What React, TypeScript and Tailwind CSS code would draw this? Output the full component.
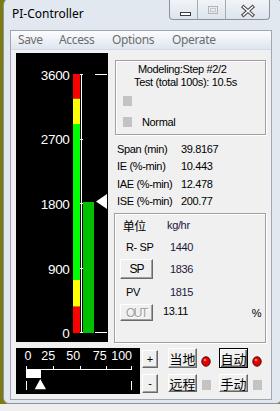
import React from "react";

const BTN =
  "bg-[#f0f0f0] border border-t-white border-l-white border-r-[#696969] border-b-[#696969] shadow-[inset_-1px_-1px_0_#a0a0a0] flex items-center justify-center";
const BTN_DEF =
  "bg-[#f0f0f0] border border-black shadow-[inset_1px_1px_0_#fff,inset_-1px_-1px_0_#696969,inset_-2px_-2px_0_#a0a0a0] flex items-center justify-center";
const GROUP =
  "border border-[#a0a0a0] shadow-[inset_1px_1px_0_#fff,1px_1px_0_#fff]";
const CJK = "font-['Noto_Sans_CJK_SC',sans-serif]";

function Gauge() {
  const labels: [string, number][] = [
    ["3600", 27],
    ["2700", 91.3],
    ["1800", 156.3],
    ["900", 221.3],
    ["0", 285.3],
  ];
  const ticks = [21, 86, 150, 215, 279];
  return (
    <svg width={92} height={289} className="block bg-black">
      {labels.map(([t, y]) => (
        <text
          key={t}
          x={53.5}
          y={y}
          textAnchor="end"
          fill="#fff"
          fontFamily="'Liberation Sans', Arial, sans-serif"
          fontSize={13.5}
        >
          {t}
        </text>
      ))}
      <rect x={57} y={21} width={7} height={24.7} fill="#ff0000" />
      <rect x={57} y={45.7} width={7} height={25.3} fill="#ffff00" />
      <rect x={57} y={71} width={7} height={156} fill="#00ff00" />
      <rect x={57} y={227} width={7} height={26.7} fill="#ffff00" />
      <rect x={57} y={253.7} width={7} height={26.3} fill="#ff0000" />
      <rect x={65} y={21} width={1} height={259} fill="#fff" />
      {ticks.map((y) => (
        <rect key={y} x={64} y={y} width={3} height={1} fill="#fff" />
      ))}
      <rect x={67} y={149} width={11} height={131} fill="#00c000" />
      <polygon points="80,148.5 91,141 91,156" fill="#fff" />
      <rect x={79} y={21} width={12} height={1} fill="#fff" />
      <rect x={79} y={279} width={12} height={1} fill="#fff" />
    </svg>
  );
}

function Slider() {
  const labels: [string, number][] = [
    ["0", 8.5],
    ["25", 25.2],
    ["50", 50.2],
    ["75", 76.8],
    ["100", 95.2],
  ];
  const ticks = [10, 36.7, 63.7, 89.7, 115];
  return (
    <svg width={124} height={46} className="block bg-black">
      {labels.map(([t, x]) => (
        <text
          key={t}
          x={x}
          y={12.2}
          fill="#fff"
          fontFamily="'Liberation Sans', Arial, sans-serif"
          fontSize={12.5}
        >
          {t}
        </text>
      ))}
      <rect x={10} y={21} width={106} height={1} fill="#fff" />
      {ticks.map((x) => (
        <rect key={x} x={Math.round(x)} y={18} width={1} height={3} fill="#fff" />
      ))}
      <rect x={10} y={21} width={15} height={9} fill="#fff" />
      <rect x={10} y={33} width={1} height={9} fill="#fff" />
      <rect x={115} y={33} width={1} height={9} fill="#fff" />
      <polygon points="24.3,31 18.7,41.3 30,41.3" fill="#fff" />
    </svg>
  );
}

function Led() {
  return (
    <svg width={10} height={11} viewBox="0 0 10 11" className="block">
      <ellipse cx={5} cy={5.5} rx={4.2} ry={4.7} fill="#e60000" stroke="#4a0000" strokeWidth={1} />
      <ellipse cx={4} cy={4} rx={1.4} ry={1.2} fill="#ff7070" />
    </svg>
  );
}

function CaptionButtons() {
  return (
    <div className="ml-auto mr-[11px] flex h-[22px] border border-t-0 border-[#8a949f] rounded-b-[4px] overflow-hidden bg-linear-to-b from-[#f3f6f9] to-[#dde4ec] shadow-[inset_0_1px_0_#fff]">
      <div className="w-[28px] h-full border-r border-[#a3acb6] relative">
        <svg width={28} height={22} className="block">
          <rect x={10.5} y={14.5} width={10} height={3} fill="#fff" stroke="#3e3e3e" />
        </svg>
      </div>
      <div className="w-[28px] h-full border-r border-[#a3acb6]">
        <svg width={28} height={22} className="block">
          <rect x={10.5} y={8.5} width={9} height={7} fill="none" stroke="#b4b4b4" />
          <rect x={12.5} y={10.5} width={5} height={3} fill="none" stroke="#c8c8c8" />
        </svg>
      </div>
      <div className="w-[43px] h-full">
        <svg width={43} height={22} className="block">
          <path d="M17.5 9 L26.5 17 M26.5 9 L17.5 17" stroke="#4a4a4a" strokeWidth={3.6} strokeLinecap="square" />
          <path d="M17.5 9 L26.5 17 M26.5 9 L17.5 17" stroke="#fff" strokeWidth={1.5} strokeLinecap="square" />
        </svg>
      </div>
    </div>
  );
}

function Menu() {
  return (
    <div className="h-[19px] flex items-center pl-[7px] bg-linear-to-b from-[#fbfcfe] to-[#dfe6ef] border-b border-[#d3dae3] font-['Noto_Sans',sans-serif] text-[12px] leading-[16px] text-[#6d6d6d]">
      <span className="w-[41px]">Save</span>
      <span className="w-[53px]">Access</span>
      <span className="w-[60px]">Options</span>
      <span>Operate</span>
    </div>
  );
}

function Stats() {
  const rows: [string, string][] = [
    ["Span (min)", "39.8167"],
    ["IE (%-min)", "10.443"],
    ["IAE (%-min)", "12.478"],
    ["ISE (%-min)", "200.77"],
  ];
  return (
    <div className="mt-[5.5px] flex flex-col">
      {rows.map(([a, b]) => (
        <div key={a} className="h-[17.5px] flex items-center pl-[3px] leading-[13px]">
          <span className="w-[64px]">{a}</span>
          <span>{b}</span>
        </div>
      ))}
    </div>
  );
}

function Group2() {
  const val = "text-[#1d1640]";
  return (
    <div className={`mt-[2.5px] w-[152px] h-[130px] flex flex-col ${GROUP}`}>
      <div className="mt-[4px] h-[16px] flex items-center">
        <span className={`w-[52px] pl-[7.7px] text-[12px] leading-none ${CJK}`}>单位</span>
        <span className={`${val} -mt-[1px]`}>kg/hr</span>
      </div>
      <div className="mt-[5.5px] h-[16px] flex items-center">
        <span className="w-[55px] pl-[11px]">R- SP</span>
        <span className={val}>1440</span>
      </div>
      <div className="mt-[3.5px] h-[20px] flex items-center">
        <div className="w-[55px] pl-[5px]">
          <div className={`w-[33px] h-[20px] text-[12px] tracking-[-1px] ${BTN}`}>SP</div>
        </div>
        <span className={val}>1836</span>
      </div>
      <div className="mt-[5px] h-[16px] flex items-center">
        <span className="w-[55px] pl-[11px]">PV</span>
        <span className={val}>1815</span>
      </div>
      <div className="mt-[4px] h-[17px] flex items-center">
        <div className="w-[48px] pl-[5px]">
          <div
            className={`w-[33px] h-[17px] text-[12px] tracking-[-1.4px] text-[#a0a0a0] [text-shadow:1px_1px_0_#fff] ${BTN}`}
          >
            OUT
          </div>
        </div>
        <span className="w-[88.7px] -mt-[2px]">13.11</span>
        <span className="mt-[1px]">%</span>
      </div>
    </div>
  );
}

function Group1() {
  return (
    <div className={`mt-[7px] ml-[1px] w-[151px] h-[75px] ${GROUP} leading-[12.5px]`}>
      <div className="pt-[2px]">
        <div className="pl-[22px]">Modeling:Step #2/2</div>
        <div className="pl-[18px]">Test (total 100s): 10.5s</div>
      </div>
      <div className="mt-[8px] ml-[7px] w-[9px] h-[10px] bg-[#c3c3c3]" />
      <div className="mt-[11px] h-[10px] flex items-center">
        <div className="ml-[7px] w-[9px] h-[10px] bg-[#c3c3c3]" />
        <span className="ml-[10px] mt-[1px]">Normal</span>
      </div>
    </div>
  );
}

function BottomButtons() {
  return (
    <div className={`ml-[2px] flex flex-col ${CJK}`}>
      <div className="h-[20px] flex items-start">
        <div className={`mt-[2px] w-[16px] h-[18px] text-[11px] font-['Liberation_Sans',sans-serif] ${BTN}`}>+</div>
        <div className={`ml-[10px] w-[29px] h-[20px] text-[13px] leading-none ${BTN}`}>当地</div>
        <div className="ml-[4px] mt-[8px]">
          <Led />
        </div>
        <div className={`ml-[8px] w-[29px] h-[20px] text-[13px] leading-none ${BTN_DEF}`}>自动</div>
        <div className="ml-[4px] mt-[8px]">
          <Led />
        </div>
      </div>
      <div className="mt-[6px] h-[19px] flex items-start">
        <div className={`w-[16px] h-[19px] text-[11px] font-['Liberation_Sans',sans-serif] ${BTN}`}>-</div>
        <div className={`ml-[10px] w-[29px] h-[18px] text-[13px] leading-none ${BTN}`}>远程</div>
        <div className="ml-[4.5px] mt-[6px] w-[9px] h-[10px] bg-[#c3c3c3]" />
        <div className={`ml-[8.5px] w-[29px] h-[18px] text-[13px] leading-none ${BTN}`}>手动</div>
        <div className="ml-[4.5px] mt-[6px] w-[9px] h-[10px] bg-[#c3c3c3]" />
      </div>
    </div>
  );
}

export default function App() {
  return (
    <div className="w-[280px] h-[411px] overflow-hidden bg-[#7c7b0f] font-['Liberation_Sans',Arial,sans-serif] text-[11px] tracking-[-0.35px] text-black">
      <div className="ml-[3px] -mt-[3px] w-[279px] h-[407px] rounded-t-[8px] rounded-b-[6px] border border-[#8b949e] bg-[#e2e8ef] flex flex-col tracking-normal">
        <div className="h-[32px] flex items-start">
          <div className="pl-[8px] pt-[8px] font-['Noto_Sans',sans-serif] text-[12px] leading-[16px] text-black">
            PI-Controller
          </div>
          <CaptionButtons />
        </div>
        <div className="ml-[6px] w-[262px] h-[370px] border border-[#9ea7b2] bg-[#f0f0f0] flex flex-col tracking-[-0.35px]">
          <Menu />
          <div className="flex pl-[5px] pt-[3px]">
            <Gauge />
            <div className="ml-[6px] w-[152px] flex flex-col">
              <Group1 />
              <Stats />
              <Group2 />
            </div>
          </div>
          <div className="flex mt-[5px] pl-[5px] tracking-normal">
            <Slider />
            <BottomButtons />
          </div>
        </div>
      </div>
      <div className="h-[7px] bg-[#efefef]" />
    </div>
  );
}
